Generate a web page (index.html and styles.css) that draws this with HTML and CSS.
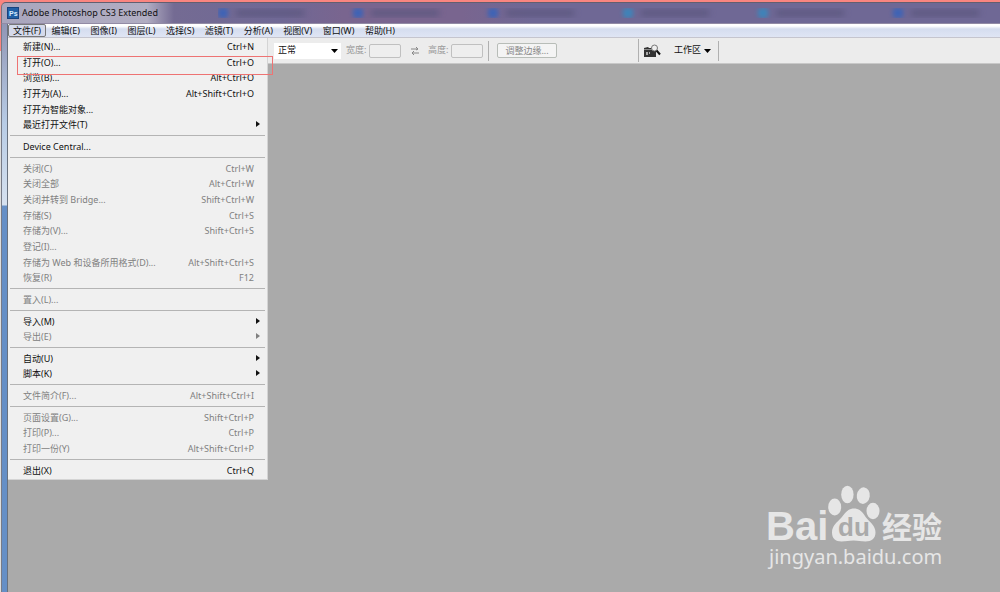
FILE: index.html
```
<!DOCTYPE html>
<html lang="zh-CN">
<head>
<meta charset="utf-8">
<title>Adobe Photoshop CS3 Extended</title>
<link rel="stylesheet" href="styles.css">
</head>
<body>
<div class="window">
  <header class="titlebar">
    <svg class="app-icon" viewBox="0 0 12 12" aria-hidden="true"><rect width="12" height="12" fill="#17437f"/><rect x="1" y="1" width="10" height="10" fill="#225fa5"/><text x="2" y="9" class="app-icon-text">Ps</text></svg>
    <h1 class="title">Adobe Photoshop CS3 Extended</h1>
    <div class="glass" aria-hidden="true">
      <span class="ghost"></span><span class="ghost"></span><span class="ghost"></span><span class="ghost teal"></span><span class="ghost teal"></span><span class="ghost"></span>
    </div>
  </header>
  <div class="frame">
    <nav class="menubar">
      <div class="menu-list">
        <button class="menu-title open">文件(F)</button>
        <button class="menu-title">编辑(E)</button>
        <button class="menu-title">图像(I)</button>
        <button class="menu-title">图层(L)</button>
        <button class="menu-title">选择(S)</button>
        <button class="menu-title">滤镜(T)</button>
        <button class="menu-title">分析(A)</button>
        <button class="menu-title">视图(V)</button>
        <button class="menu-title">窗口(W)</button>
        <button class="menu-title">帮助(H)</button>
      </div>
    </nav>
    <div class="toolbar">
      <div class="options">
        <div class="mode"><select class="mode-select" aria-label="模式"><option>正常</option></select><svg class="caret" viewBox="0 0 7 4" aria-hidden="true"><path d="M0 0h7L3.500 4z"/></svg></div>
        <label class="field-label" for="w">宽度:</label><input class="field" id="w" type="text" disabled>
        <svg class="swap" viewBox="0 0 10 10" aria-hidden="true"><path d="M1 3h7M6 1l2 2-2 1M9 7H2M4 5L2 7l2 2"/></svg>
        <label class="field-label" for="h">高度:</label><input class="field" id="h" type="text" disabled>
        <span class="rule"></span>
        <button class="refine" disabled>调整边缘...</button>
      </div>
      <span class="rule tall"></span>
      <button class="bridge" aria-label="Bridge"><svg class="bridge-icon" viewBox="0 0 17 14" aria-hidden="true"><path fill="#333" d="M0 4l4-1 1 1h7v9H0z"/><path fill="#888" d="M0 5h12v1H0z"/><path fill="#aaa" d="M2 8h2v3H2zM5 8h1v2H5z"/><circle cx="10.500" cy="4" r="3" fill="#eee" stroke="#777"/><path d="M12.500 6.500l3.500 4" stroke="#111" stroke-width="2"/></svg></button>
      <button class="workspace">工作区 <svg class="caret" viewBox="0 0 7 4" aria-hidden="true"><path d="M0 0h7L3.500 4z"/></svg></button>
      <span class="rule"></span>
    </div>
    <main class="canvas"></main>
    <div class="menu">
      <button class="item">新建(N)...<kbd>Ctrl+N</kbd></button>
      <button class="item">打开(O)...<kbd>Ctrl+O</kbd></button>
      <button class="item">浏览(B)...<kbd>Alt+Ctrl+O</kbd></button>
      <button class="item">打开为(A)...<kbd>Alt+Shift+Ctrl+O</kbd></button>
      <button class="item">打开为智能对象...</button>
      <button class="item sub">最近打开文件(T)</button>
      <hr class="sep">
      <button class="item">Device Central...</button>
      <hr class="sep">
      <button class="item" disabled>关闭(C)<kbd>Ctrl+W</kbd></button>
      <button class="item" disabled>关闭全部<kbd>Alt+Ctrl+W</kbd></button>
      <button class="item" disabled>关闭并转到 Bridge...<kbd>Shift+Ctrl+W</kbd></button>
      <button class="item" disabled>存储(S)<kbd>Ctrl+S</kbd></button>
      <button class="item" disabled>存储为(V)...<kbd>Shift+Ctrl+S</kbd></button>
      <button class="item" disabled>登记(I)...</button>
      <button class="item" disabled>存储为 Web 和设备所用格式(D)...<kbd>Alt+Shift+Ctrl+S</kbd></button>
      <button class="item" disabled>恢复(R)<kbd>F12</kbd></button>
      <hr class="sep">
      <button class="item" disabled>置入(L)...</button>
      <hr class="sep">
      <button class="item sub">导入(M)</button>
      <button class="item sub" disabled>导出(E)</button>
      <hr class="sep">
      <button class="item sub">自动(U)</button>
      <button class="item sub">脚本(K)</button>
      <hr class="sep">
      <button class="item" disabled>文件简介(F)...<kbd>Alt+Shift+Ctrl+I</kbd></button>
      <hr class="sep">
      <button class="item" disabled>页面设置(G)...<kbd>Shift+Ctrl+P</kbd></button>
      <button class="item" disabled>打印(P)...<kbd>Ctrl+P</kbd></button>
      <button class="item" disabled>打印一份(Y)<kbd>Alt+Shift+Ctrl+P</kbd></button>
      <hr class="sep">
      <button class="item">退出(X)<kbd>Ctrl+Q</kbd></button>
    </div>
    <div class="marker"></div>
    <svg class="watermark" viewBox="0 0 182 96" role="img" aria-label="Baidu 经验">
      <text class="wm-bai" x="1" y="60">Bai</text>
      <ellipse cx="69.700" cy="27" rx="6.500" ry="8.500"/><ellipse cx="82.400" cy="14.500" rx="6.200" ry="8.700"/><ellipse cx="98.300" cy="15.600" rx="6.500" ry="8.300" transform="rotate(8 98.300 15.600)"/><ellipse cx="108" cy="31" rx="6.500" ry="8.300"/>
      <path d="M89 28.500c6 0 9 4 12 9 4 5 9.500 8 9.500 15 0 6-4 9-10 9-5 0-7-1-12-1s-7 1-12 1c-6 0-9.500-3-9.500-9 0-7 5-10 9.500-15 4-5 6.500-9 12.500-9z"/>
      <text class="wm-du" x="73" y="56">du</text>
      <text class="wm-cn" x="117" y="58">经验</text>
      <text class="wm-url" x="4" y="84">jingyan.baidu.com</text>
    </svg>
  </div>
</div>
</body>
</html>
```
FILE: styles.css
```
* { box-sizing: border-box; }
body {
  margin: 0;
  font: 9px/1.56 "Noto Sans", "Noto Sans CJK SC", sans-serif;
  color: #111;
  background: #aaa;
}
button, select, input { font: inherit; color: inherit; margin: 0; padding: 0; border: 0; background: none; }
.window {
  min-height: 100vh;
  display: flex;
  flex-direction: column;
  border-top: 2px solid #fa8580;
  background: #fa8580;
}
.titlebar {
  height: 22px;
  margin-left: 1px;
  padding-left: 5px;
  display: flex;
  align-items: center;
  gap: 3px;
  border-top: 1px solid #625f70;
  border-left: 1px solid #77727f;
  border-bottom: 1px solid #928ba5;
  border-top-left-radius: 5px;
  background: linear-gradient(90deg, #a9a6bd 0, #b1adc2 145px, #746b93 172px, #6f6895 280px, #79658f 340px, #79658f 460px, #6f6895 530px);
}
.app-icon { width: 12px; height: 12px; flex: none; }
.app-icon-text { font: bold 7px "Liberation Sans", sans-serif; fill: #d8edff; }
.title { margin: 0; font-size: 9px; font-weight: 400; line-height: 16px; white-space: nowrap; width: 193px; flex: none; }
.glass { flex: 1; display: flex; overflow: hidden; }
.ghost { flex: 0 0 135px; display: flex; align-items: center; gap: 8px; }
.ghost::before { content: ""; width: 10px; height: 10px; border-radius: 2px; background: #3f63b5; filter: blur(2px); }
.ghost.teal::before { background: #3f83b8; }
.ghost::after { content: ""; width: 68px; height: 6px; background: #5c577f; filter: blur(3px); }
.frame {
  position: relative;
  flex: 1;
  display: flex;
  flex-direction: column;
  padding-left: 8px;
  background: linear-gradient(90deg, transparent 1px, #777b87 1px 2px, transparent 2px 7px, #68717e 7px 8px, transparent 8px), linear-gradient(#fa8580 27px, #ddd 27px) 0 0 / 1px 100% no-repeat, linear-gradient(#9096b5, #b8cce5 100px, #d6e1ef 181px, #658fc6 182px);
}
.menubar {
  height: 14px;
  background: linear-gradient(#fff 0 2px, #d5ddef 5px, #dfe5f4 13px);
  border-bottom: 1px solid #c5c5ce;
}
.menu-list { width: 392px; display: flex; justify-content: space-between; }
.menu-title { height: 13px; padding: 0 5px; line-height: 13px; white-space: nowrap; }
.menu-title.open { border: 1px solid #777; border-radius: 2px; background: #d5daeb; line-height: 11px; padding: 0 4px; }
.toolbar {
  height: 26px;
  display: flex;
  align-items: center;
  background: #ececec;
  border-bottom: 1px solid #c8c8c8;
}
.options { width: 630px; padding-left: 266px; display: flex; align-items: center; flex: none; white-space: nowrap; }
.mode { width: 67px; height: 16px; padding: 0 3px 0 4px; display: flex; align-items: center; background: #fff; margin-right: 5px; }
.mode-select { flex: 1; min-width: 0; appearance: none; }
.caret { width: 7px; height: 4px; flex: none; }
.field-label { width: 23px; color: #999; }
.field { width: 32px; height: 14px; border: 1px solid #c0c0c0; border-radius: 2px; background: #eee; }
.swap { width: 10px; height: 10px; margin: 0 8px 0 9px; fill: none; stroke: #888; }
.rule { width: 1px; height: 20px; background: #b0b0b0; margin: 0 8px 0 5px; }
.refine { width: 60px; height: 15px; border: 1px solid #b8bdb8; border-radius: 2px; background: #f4f4f4; color: #888; }
.rule.tall { height: 23px; margin: 0 5px 0 0; }
.bridge { width: 17px; height: 14px; display: flex; }
.bridge-icon { width: 17px; height: 14px; }
.workspace { display: flex; align-items: center; gap: 3px; margin-left: 13px; white-space: nowrap; }
.workspace + .rule { margin-left: 7px; }
.canvas { flex: 1; background: #aaa; }
.menu {
  position: absolute;
  left: 8px;
  top: 14px;
  width: 260px;
  padding: 1px 2px;
  background: #f0f0f0;
  border-right: 1px solid #d4d4d4;
  border-bottom: 1px solid #d4d4d4;
}
.item {
  width: 100%;
  padding: 0 11px 0 13px;
  display: flex;
  justify-content: space-between;
  line-height: 1.74;
  text-align: left;
  white-space: nowrap;
}
.item:disabled { color: #808080; }
.item kbd { font: inherit; }
.item.sub::after { content: ""; align-self: flex-start; margin: 4px -6px 0 0; border: 3px solid transparent; border-left: 4px solid; border-right: 0; }
.sep { margin: 2px 0 3px; border: 0; height: 1px; background: #b4b4b4; }
.marker { position: absolute; left: 17px; top: 32px; width: 256px; height: 19px; border: 1px solid #ee7373; }
.watermark { position: absolute; right: 53px; bottom: 16px; width: 182px; height: 96px; fill: #e6e6e6; }
.wm-bai { font: bold 40px "Liberation Sans", sans-serif; }
.wm-du { font: bold 26px "Liberation Sans", sans-serif; fill: #aaa; }
.wm-cn { font: bold 30px "Noto Sans CJK SC", sans-serif; }
.wm-url { font: 20px "Noto Sans", sans-serif; }
```
